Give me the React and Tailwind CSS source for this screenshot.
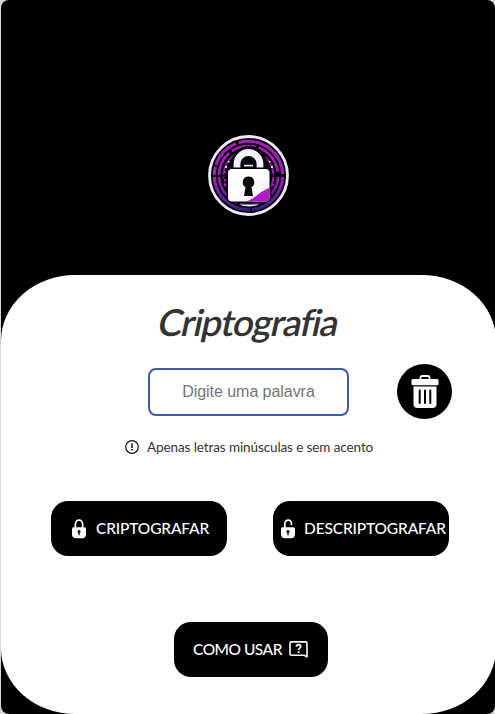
function Logo() {
  return (
    <svg className="block size-[82px]" viewBox="0 0 82 82" fill="none">
      <defs>
        <linearGradient id="ring" x1="0" y1="0" x2="0" y2="1">
          <stop offset="0" stopColor="#a81dba" />
          <stop offset="0.55" stopColor="#a020bd" />
          <stop offset="1" stopColor="#38207c" />
        </linearGradient>
        <linearGradient id="body" x1="0" y1="0" x2="1" y2="1">
          <stop offset="0.4" stopColor="#ffffff" />
          <stop offset="1" stopColor="#eef0ff" />
        </linearGradient>
      </defs>
      <circle cx="40.500" cy="40.500" r="39" fill="#08030d" stroke="#eceafa" strokeWidth="2.800" />
      <g stroke="url(#ring)">
        <circle cx="40.500" cy="40.500" r="34.200" strokeWidth="3" strokeDasharray="50 2 64 2 30 3 62 3.700" />
        <circle cx="40.500" cy="40.500" r="29.500" strokeWidth="2.600" strokeDasharray="20 5 30 3 60 3 25 3 32 4" />
        <circle cx="40.500" cy="40.500" r="25" strokeWidth="1.400" strokeDasharray="12 3 3 3 50 4 30 3" />
      </g>
      <path d="M4 41h12M65 41h12" stroke="#08030d" strokeWidth="1.800" />
      <path d="M23 34V29a18 18 0 0 1 36 0v5z" fill="#08030d" />
      <path d="M29 34v-5a11.500 11.500 0 0 1 23 0v5" stroke="#f3f3fe" strokeWidth="6.800" />
      <path d="M36 30.700h9" stroke="#eceafa" strokeWidth="1.800" />
      <g fill="#eceafa">
        <rect x="17" y="31" width="2" height="2" /><rect x="63" y="31" width="2" height="2" />
        <rect x="20" y="26" width="1.500" height="1.500" /><rect x="61" y="26" width="1.500" height="1.500" />
      </g>
      <g fill="#b21bc7">
        <rect x="16" y="36" width="2" height="2" /><rect x="16" y="44" width="2" height="2" />
        <rect x="16" y="49" width="2" height="2" /><rect x="64" y="36" width="2" height="2" />
        <rect x="64" y="44" width="2" height="2" /><rect x="64" y="49" width="2" height="2" />
      </g>
      <rect x="18.500" y="32.500" width="44" height="35" rx="5" fill="#08030d" />
      <rect x="20" y="34" width="41.500" height="32.500" rx="4" fill="url(#body)" />
      <path d="M61.500 53v9.500a4 4 0 0 1-4 4H38.500C48 63 52 56 61.500 53z" fill="#b21bc7" />
      <path d="M40.500 41.500a5.700 5.700 0 0 1 3 10.600l1.500 9h-9l1.500-9A5.700 5.700 0 0 1 40.500 41.500z" fill="#09070d" />
      <path d="M31 69.500h20q-10 4-20 0z" fill="#d7dcff" />
    </svg>
  );
}

function LockIcon({ open }) {
  return (
    <svg className="block h-5 w-[14px] shrink-0" viewBox="0 0 14 20" fill="none">
      <path
        d={open ? "M3.900 9V4.600a3.300 3.500 0 0 1 6.600 0v.700" : "M3.400 9V5a3.600 3.900 0 0 1 7.200 0v4"}
        stroke="#fff"
        strokeWidth="1.700"
        strokeLinecap="round"
      />
      <path d="M1.500 8.200h11q1.500 0 1.500 1.500v5.500q0 4-4 4H4q-4 0-4-4V9.700q0-1.500 1.500-1.500z" fill="#fff" />
      <circle cx="7" cy="12.600" r="1.500" fill="#000" />
      <path d="M7 13v3.200" stroke="#000" strokeWidth="1.300" />
    </svg>
  );
}

function TrashIcon() {
  return (
    <svg className="block h-[34px] w-7" viewBox="0 0 28 34" fill="none">
      <path d="M9.500 4.500V2.500q0-1.500 1.800-1.500h5.400q1.800 0 1.800 1.500v2" stroke="#fff" strokeWidth="1.800" />
      <rect x="0.500" y="4" width="27" height="6.200" rx="1.500" fill="#fff" />
      <path d="M2.500 11.500h23v17.500q0 4-4 4h-15q-4 0-4-4z" fill="#fff" />
      <path d="M8.700 15.500v12.500M14 15.500v12.500M19.300 15.500v12.500" stroke="#000" strokeWidth="2" strokeLinecap="round" />
    </svg>
  );
}

function AlertIcon() {
  return (
    <svg className="block size-[14px] shrink-0" viewBox="0 0 14 14" fill="none" stroke="#111">
      <circle cx="7" cy="7" r="6.300" strokeWidth="1.200" />
      <path d="M7 3.200v4.700M7 9v1.500" strokeWidth="1.500" />
    </svg>
  );
}

function HelpIcon() {
  return (
    <svg className="block h-[17px] w-[19px] shrink-0" viewBox="0 0 19 17" fill="none" stroke="#fff">
      <path d="M2.500.9h14q1.500 0 1.500 1.500v13.500l-3-1.700H2.500Q1 14.200 1 12.700V2.400Q1 .9 2.500.9z" strokeWidth="1.600" strokeLinejoin="round" />
      <path d="M7.400 5.700c0-2.700 4.300-2.700 4.300 0 0 1.500-2.100 1.500-2.100 3.200M9.600 10.200v1.700" strokeWidth="1.700" />
    </svg>
  );
}

export default function App() {
  return (
    <div className="h-[714px] w-[495px] overflow-hidden bg-[#d5d6da] pl-px font-['Lato',sans-serif]">
      <main className="flex h-full w-[494px] flex-col overflow-hidden rounded-[8px] bg-black">
        <header className="flex h-[275px] shrink-0 justify-center pt-[135px] pl-px">
          <Logo />
        </header>
        <section className="flex h-[439px] w-[495px] shrink-0 flex-col items-center rounded-[15%] bg-white">
          <h1 className="mt-[24px] h-[46px] w-[179px] -skew-x-12 whitespace-nowrap text-[37px] leading-[46px] font-semibold tracking-[-1.25px] text-[#333]">
            Criptografia
          </h1>
          <div className="mt-[19px] flex w-full items-center pl-[147px]">
            <input
              className="h-12 w-[201px] rounded-[8px] border-2 border-[#3f5aa9] bg-white text-center font-['Liberation_Sans',Arial,sans-serif] text-[16px] tracking-[-0.05px] placeholder:text-[#757575]"
              placeholder="Digite uma palavra"
            />
            <button className="ml-12 flex size-[55px] items-center justify-center rounded-full bg-black" aria-label="Limpar">
              <TrashIcon />
            </button>
          </div>
          <div className="mt-[18px] flex h-5 w-full items-center gap-2 pl-[124px] text-[13.500px] tracking-[-0.1px] text-[#333]">
            <AlertIcon />
            <span className="whitespace-nowrap">Apenas letras minúsculas e sem acento</span>
          </div>
          <div className="mt-11 flex w-full gap-[46px] pl-[50px] text-[15.500px] font-medium tracking-[-0.15px] text-white">
            <button className="flex h-[55px] w-[176px] items-center gap-[10px] rounded-[17px] bg-black pl-[21px]">
              <LockIcon />
              <span className="whitespace-nowrap">CRIPTOGRAFAR</span>
            </button>
            <button className="flex h-[55px] w-[176px] items-center gap-[9px] rounded-[17px] bg-black pl-2">
              <LockIcon open />
              <span className="whitespace-nowrap">DESCRIPTOGRAFAR</span>
            </button>
          </div>
          <div className="mt-[66px] flex w-full pl-[173px]">
            <button className="flex h-[55px] w-[154px] items-center gap-[7px] rounded-[17px] bg-black pl-[19px] text-[15.500px] font-medium tracking-[-0.5px] text-white">
              <span className="w-[89px] whitespace-nowrap">COMO USAR</span>
              <HelpIcon />
            </button>
          </div>
        </section>
      </main>
    </div>
  );
}
